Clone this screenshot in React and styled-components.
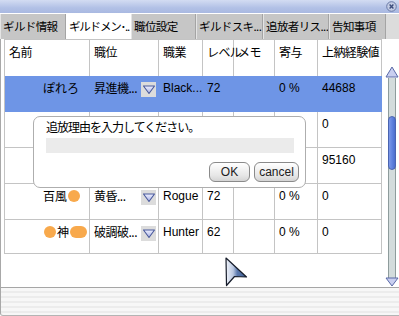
import React from "react";
import styled, { createGlobalStyle } from "styled-components";

const GlobalStyle = createGlobalStyle`
  body {
    margin: 0;
    background: #ffffff;
    font-family: "Liberation Sans", "Noto Sans CJK JP", sans-serif;
    font-size: 12px;
    color: #000;
  }
`;

const tabs = [
  { label: "ギルド情報", w: 66 },
  { label: "ギルドメン･..", w: 65, active: true, tight: true },
  { label: "職位設定", w: 65 },
  { label: "ギルドスキ...", w: 67 },
  { label: "追放者リス...", w: 66 },
  { label: "告知事項", w: 57 },
];

const columns = [86, 69, 44, 31, 41, 43, 64];
const headers = ["名前", "職位", "職業", "レベル", "メモ", "寄与", "上納経験値"];

// rows 2 and 3 sit under the dialog; only their last column shows
const members = [
  { name: ["ぽれろ"], rank: "昇進機...", job: "Black...", lv: "72", share: "0 %", exp: "44688", selected: true },
  { name: [], rank: "", job: "", lv: "", share: "", exp: "0" },
  { name: [], rank: "", job: "", lv: "", share: "", exp: "95160" },
  { name: ["百風", { blob: 12 }], rank: "黄昏...", job: "Rogue", lv: "72", share: "0 %", exp: "0" },
  { name: [{ blob: 12 }, "神", { blob: 17 }], rank: "破調破...", job: "Hunter", lv: "62", share: "0 %", exp: "0" },
];

const rowHeights = [36, 36, 36, 36, 34];

const App = () => {
  return (
    <>
      <GlobalStyle />
      <Window>
        <TitleBar>
          <CloseIcon width="11" height="11" viewBox="0 0 11 11">
            <circle cx="5.5" cy="5.5" r="4.8" fill="#c3cce4" stroke="#6a7aa6" strokeWidth="1" />
            <path d="M3.6 3.6 L7.4 7.4 M7.4 3.6 L3.6 7.4" stroke="#3c4c7c" strokeWidth="1.4" />
          </CloseIcon>
        </TitleBar>
        <TabStrip>
          {tabs.map((t) => (
            <Tab key={t.label} $w={t.w} $active={t.active} $tight={t.tight}>
              {t.label}
            </Tab>
          ))}
        </TabStrip>
        <Body>
          <Table>
            <Row $h={36}>
              {headers.map((h) => (
                <HeadCell key={h}>{h}</HeadCell>
              ))}
            </Row>
            {members.map((m, i) => (
              <Row key={i} $h={rowHeights[i]} $selected={m.selected}>
                <NameCell $selected={m.selected}>
                  {m.name.map((part, j) =>
                    typeof part === "string" ? (
                      <span key={j}>{part}</span>
                    ) : (
                      <Blob key={j} $w={part.blob} />
                    )
                  )}
                </NameCell>
                <RankCell $selected={m.selected}>
                  {m.rank && <span>{m.rank}</span>}
                  {m.rank && (
                    <DropButton>
                      <svg width="14" height="11" viewBox="0 0 14 11">
                        <defs>
                          <linearGradient id={`dg${i}`} x1="0" y1="0" x2="0" y2="1">
                            <stop offset="0" stopColor="#eef0ff" />
                            <stop offset="1" stopColor="#a7b0e4" />
                          </linearGradient>
                        </defs>
                        <path d="M1.5 2 L12.5 2 L7 9.5 Z" fill={`url(#dg${i})`} stroke="#4a5a9c" strokeWidth="1.1" strokeLinejoin="round" />
                      </svg>
                    </DropButton>
                  )}
                </RankCell>
                <Cell $selected={m.selected}>{m.job}</Cell>
                <Cell $selected={m.selected}>{m.lv}</Cell>
                <Cell $selected={m.selected}></Cell>
                <Cell $selected={m.selected}>{m.share}</Cell>
                <Cell $selected={m.selected}>{m.exp}</Cell>
              </Row>
            ))}
          </Table>
          <Scrollbar>
            <ArrowIcon width="14" height="15" viewBox="0 0 14 15">
              <path d="M1 13 L7 3 L13 13 Z" fill="#c9cff0" stroke="#5a6aa8" strokeWidth="1" strokeLinejoin="round" />
            </ArrowIcon>
            <Track>
              <Thumb />
            </Track>
            <ArrowIcon width="14" height="10" viewBox="0 0 14 10">
              <path d="M1 1 L13 1 L7 9 Z" fill="#c9cff0" stroke="#5a6aa8" strokeWidth="1" strokeLinejoin="round" />
            </ArrowIcon>
          </Scrollbar>

          <Dialog>
            <Message>追放理由を入力してください。</Message>
            <ReasonInput />
            <ButtonRow>
              <DialogButton $w={41}>OK</DialogButton>
              <DialogButton $w={45}>cancel</DialogButton>
            </ButtonRow>
          </Dialog>

          <Cursor width="24" height="30" viewBox="0 0 24 30">
            <defs>
              <linearGradient id="cur" x1="0" y1="0" x2="1" y2="0">
                <stop offset="0" stopColor="#f2f5fb" />
                <stop offset="0.35" stopColor="#b8c6e0" />
                <stop offset="0.55" stopColor="#5b79ae" />
                <stop offset="1" stopColor="#3f5e94" />
              </linearGradient>
            </defs>
            <path d="M1 1 L21.5 20 L9.5 19.5 L1.5 28.5 Z" fill="url(#cur)" stroke="#161c2a" strokeWidth="1.2" strokeLinejoin="round" />
          </Cursor>
        </Body>
        <StatusBar />
      </Window>
    </>
  );
};

const Window = styled.div`
  position: relative;
  width: 399px;
  height: 316px;
  overflow: hidden;
  background: #ffffff;
  display: flex;
  flex-direction: column;
`;

const TitleBar = styled.div`
  height: 13px;
  display: flex;
  justify-content: flex-end;
  align-items: center;
  padding-right: 2px;
  background: linear-gradient(#d3dcf2, #b2c1e6 60%, #a9b9e1);
  border-bottom: 1px solid #ffffff;
`;

const CloseIcon = styled.svg`
  display: block;
`;

const TabStrip = styled.div`
  height: 26px;
  display: flex;
  align-items: flex-end;
  background: #dcdcdc;
`;

const Tab = styled.div`
  width: ${(p) => p.$w}px;
  height: 25px;
  box-sizing: border-box;
  padding: 5px 0 0 2px;
  font-family: "Noto Sans CJK JP", sans-serif;
  font-size: 11.5px;
  line-height: 14px;
  letter-spacing: ${(p) => (p.$tight ? "-1.2px" : "-0.6px")};
  white-space: nowrap;
  overflow: hidden;
  background: ${(p) => (p.$active ? "#ffffff" : "#c6c6c6")};
  border-left: 1px solid ${(p) => (p.$active ? "#ffffff" : "#e4e4e4")};
  border-right: 1px solid ${(p) => (p.$active ? "#ffffff" : "#a4a4a4")};
`;

const Body = styled.div`
  position: relative;
  flex: 1;
  display: flex;
  background: #ffffff;
  border-left: 1px solid #a8a8a8;
  padding-left: 3px;
`;

const Table = styled.div`
  display: flex;
  flex-direction: column;
  align-self: flex-start;
  border-top: 1px solid #c4c4c4;
  border-left: 1px solid #c4c4c4;
`;

const Row = styled.div`
  display: grid;
  grid-template-columns: ${columns.map((c, i) => `${i === 0 ? c - 1 : c}px`).join(" ")};
  height: ${(p) => p.$h}px;
  background: ${(p) => (p.$selected ? "#6e95e6" : "transparent")};
`;

const Cell = styled.div`
  box-sizing: border-box;
  padding: 5px 0 0 4px;
  line-height: 14px;
  font-size: 12px;
  white-space: nowrap;
  overflow: hidden;
  border-right: 1px solid ${(p) => (p.$selected ? "#6e95e6" : "#c4c4c4")};
  border-bottom: 1px solid ${(p) => (p.$selected ? "#6e95e6" : "#c4c4c4")};
`;

const HeadCell = styled(Cell)`
  font-family: "Noto Sans CJK JP", sans-serif;
  letter-spacing: -0.6px;
  overflow: visible;
  border-bottom: none;
`;

const NameCell = styled(Cell)`
  padding-left: 38px;
  display: flex;
  align-items: flex-start;
  font-family: "Noto Sans CJK JP", sans-serif;
`;

const Blob = styled.span`
  display: inline-block;
  width: ${(p) => p.$w}px;
  height: 12px;
  margin: 1px 1px 0;
  border-radius: 6px;
  background: #f8a94c;
`;

const RankCell = styled(Cell)`
  display: flex;
  align-items: flex-start;
  font-family: "Noto Sans CJK JP", sans-serif;
  letter-spacing: -0.5px;
`;

const DropButton = styled.div`
  margin: 1px 2px 0 auto;
  width: 15px;
  height: 15px;
  display: flex;
  align-items: center;
  justify-content: center;
  background: #dcdcdc;
`;

const Scrollbar = styled.div`
  margin-left: 3px;
  margin-top: 25px;
  width: 14px;
  height: 223px;
  display: flex;
  flex-direction: column;
  align-items: center;
`;

const ArrowIcon = styled.svg`
  display: block;
  flex: none;
`;

const Track = styled.div`
  flex: 1;
  width: 8px;
  margin: -1px 0;
  box-sizing: border-box;
  background: #d3dcdc;
  border-left: 1px solid #8e9c9c;
  border-right: 1px solid #8e9c9c;
  padding-top: 38px;
`;

const Thumb = styled.div`
  height: 52px;
  margin: 0 -1px;
  border-radius: 4px;
  border: 1px solid #4a64b0;
  background: linear-gradient(90deg, #7c98e8, #5d7fdc 60%, #4d6ecc);
`;

const Dialog = styled.div`
  position: absolute;
  left: 32px;
  top: 77px;
  width: 273px;
  height: 72px;
  box-sizing: border-box;
  padding: 3px 6px 0 12px;
  background: #ffffff;
  border: 1px solid #aeaeae;
  border-radius: 7px;
  display: flex;
  flex-direction: column;
`;

const Message = styled.div`
  font-family: "Noto Sans CJK JP", sans-serif;
  font-size: 12px;
  line-height: 14px;
  letter-spacing: -1px;
`;

const ReasonInput = styled.div`
  margin-top: 4px;
  width: 248px;
  height: 15px;
  background: #ebebeb;
`;

const ButtonRow = styled.div`
  margin-top: 9px;
  display: flex;
  justify-content: flex-end;
  gap: 4px;
`;

const DialogButton = styled.div`
  width: ${(p) => p.$w}px;
  height: 20px;
  box-sizing: border-box;
  border: 1px solid #8a8a8a;
  border-radius: 6px;
  background: linear-gradient(#ffffff, #e6e6e6 70%, #d4d4d4);
  font-size: 12px;
  line-height: 18px;
  text-align: center;
  color: #202020;
`;

const Cursor = styled.svg`
  position: absolute;
  left: 224px;
  top: 218px;
`;

const StatusBar = styled.div`
  height: 27px;
  border-top: 1px solid #a6a6a6;
  border-left: 1px solid #a8a8a8;
  border-bottom: 1px solid #b4b4b4;
  border-bottom-left-radius: 3px;
  background: repeating-linear-gradient(#f7f7f7 0, #f7f7f7 3px, #ececec 3px, #ececec 5px);
`;

export default App;
